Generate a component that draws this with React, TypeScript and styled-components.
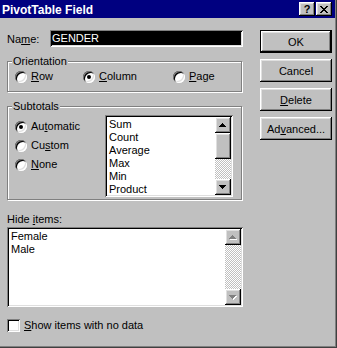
import React from 'react';
import styled, { createGlobalStyle } from 'styled-components';

const GlobalStyle = createGlobalStyle`
  html, body {
    margin: 0;
    padding: 0;
    background: #c0c0c0;
  }
  body {
    font-family: 'Liberation Sans', Arial, sans-serif;
    font-size: 11px;
    color: #000;
  }
`;

const raised = `
  box-shadow: inset -1px -1px #000, inset 1px 1px #fff, inset -2px -2px #808080, inset 2px 2px #dfdfdf;
`;

const sunken = `
  box-shadow: inset 1px 1px #808080, inset -1px -1px #fff, inset 2px 2px #000, inset -2px -2px #dfdfdf;
`;

const Window = styled.div`
  width: 337px;
  height: 348px;
  box-sizing: border-box;
  padding: 0 2px 2px 0;
  background: #c0c0c0;
  box-shadow: inset -1px -1px #404040, inset -2px -2px #808080;
  display: flex;
  flex-direction: column;
`;

const TitleBar = styled.div`
  height: 18px;
  flex-shrink: 0;
  background: #000080;
  color: #fff;
  display: flex;
  align-items: center;
  padding: 0 3px 0 2px;
  font-size: 12px;
  font-weight: bold;
`;

const TitleText = styled.span`
  flex: 1;
  line-height: 18px;
  padding-top: 1px;
`;

const CaptionButtons = styled.div`
  display: flex;
  gap: 1px;
`;

const CaptionButton = styled.div`
  width: 16px;
  height: 14px;
  background: #c0c0c0;
  ${raised}
  display: flex;
  align-items: center;
  justify-content: center;
  color: #000;
  font-size: 11px;
  font-weight: bold;
  line-height: 14px;
`;

const Body = styled.div`
  display: flex;
  padding-left: 7px;
  flex: 1;
`;

const LeftColumn = styled.div`
  width: 236px;
  display: flex;
  flex-direction: column;
`;

const RightColumn = styled.div`
  width: 72px;
  margin-left: 17px;
  padding-top: 12px;
  display: flex;
  flex-direction: column;
  gap: 6px;
`;

const Key = styled.span`
  text-decoration: underline;
  text-underline-offset: 1px;
`;

const NameRow = styled.div`
  display: flex;
  align-items: center;
  margin-top: 12px;
  height: 17px;
`;

const NameLabel = styled.label`
  width: 43px;
  padding-top: 1px;
`;

const NameField = styled.div`
  width: 193px;
  height: 17px;
  box-sizing: border-box;
  background: #000;
  color: #fff;
  padding: 0 2px;
  line-height: 17px;
  ${sunken}
`;

const GroupBox = styled.div<{ $top: number; $height: number }>`
  margin-top: ${(p) => p.$top}px;
  height: ${(p) => p.$height}px;
  width: 235px;
  box-sizing: border-box;
  border: 1px solid #808080;
  box-shadow: inset 1px 1px #fff, 1px 1px #fff;
`;

const Legend = styled.span`
  display: block;
  width: fit-content;
  margin: -7px 0 -6px 4px;
  padding: 0 1px;
  background: #c0c0c0;
  line-height: 13px;
  position: relative;
`;

const OrientationRow = styled.div`
  display: grid;
  grid-template-columns: 68px 90px 1fr;
  padding: 8px 0 0 7px;
`;

const SubtotalsRow = styled.div`
  display: flex;
  align-items: flex-start;
  padding: 8px 8px 0 7px;
`;

const RadioColumn = styled.div`
  margin-top: 5px;
  display: flex;
  flex-direction: column;
  gap: 6px;
`;

const RadioItem = styled.div`
  display: flex;
  align-items: center;
  height: 13px;
  gap: 4px;
  line-height: 13px;
  white-space: nowrap;
`;

const RadioCircle = styled.span<{ $checked?: boolean }>`
  width: 12px;
  height: 12px;
  border-radius: 50%;
  background: #fff;
  ${sunken}
  display: flex;
  align-items: center;
  justify-content: center;
  flex-shrink: 0;

  &::after {
    content: '';
    width: 4px;
    height: 4px;
    border-radius: 50%;
    background: ${(p) => (p.$checked ? '#000' : 'transparent')};
  }
`;

const ListBox = styled.div<{ $width: number; $height: number; $top?: number }>`
  width: ${(p) => p.$width}px;
  height: ${(p) => p.$height}px;
  margin-top: ${(p) => p.$top ?? 0}px;
  margin-left: auto;
  box-sizing: border-box;
  padding: 2px;
  background: #fff;
  ${sunken}
  display: flex;
  overflow: hidden;
  flex-shrink: 0;
`;

const ListItems = styled.div`
  flex: 1;
  padding: 1px 0 0 2px;
  overflow: hidden;
`;

const ListItem = styled.div`
  height: 13px;
  line-height: 13px;
  white-space: nowrap;
`;

const ScrollBar = styled.div`
  width: 16px;
  display: flex;
  flex-direction: column;
  flex-shrink: 0;
`;

const ScrollButton = styled.div`
  width: 16px;
  height: 16px;
  flex-shrink: 0;
  background: #c0c0c0;
  ${raised}
  display: flex;
  align-items: center;
  justify-content: center;
`;

const Thumb = styled.div<{ $size: number }>`
  height: ${(p) => p.$size}px;
  flex-shrink: 0;
  background: #c0c0c0;
  ${raised}
`;

const Track = styled.div`
  flex: 1;
  background: repeating-conic-gradient(#c0c0c0 0% 25%, #fff 0% 50%) 0 0 / 2px 2px;
`;

const FieldLabel = styled.div`
  margin-top: 13px;
  line-height: 13px;
`;

const CheckRow = styled.div`
  display: flex;
  align-items: center;
  gap: 4px;
  margin-top: 12px;
  height: 13px;
  line-height: 13px;
`;

const CheckBox = styled.span`
  width: 13px;
  height: 13px;
  background: #fff;
  ${sunken}
`;

const PushButton = styled.button<{ $default?: boolean }>`
  width: 72px;
  height: 23px;
  box-sizing: border-box;
  padding: 0;
  margin: 0;
  background: #c0c0c0;
  border: ${(p) => (p.$default ? '1px solid #000' : 'none')};
  ${raised}
  font-family: 'Liberation Sans', Arial, sans-serif;
  font-size: 11px;
  color: #000;
  outline: none;
`;

const Arrow = ({ down, disabled }: { down?: boolean; disabled?: boolean }) => {
  const d = down
    ? 'M0 0h7v1H0z M1 1h5v1H1z M2 2h3v1H2z M3 3h1v1H3z'
    : 'M3 0h1v1H3z M2 1h3v1H2z M1 2h5v1H1z M0 3h7v1H0z';
  return (
    <svg width="8" height="5" viewBox="0 0 8 5" shapeRendering="crispEdges" style={{ marginTop: down ? 1 : 0 }}>
      {disabled && <path d={d} fill="#fff" transform="translate(1 1)" />}
      <path d={d} fill={disabled ? '#808080' : '#000'} />
    </svg>
  );
};

const CloseGlyph = () => (
  <svg width="8" height="7" viewBox="0 0 8 7" shapeRendering="crispEdges">
    <path
      fill="#000"
      d="M0 0h2v1H0z M6 0h2v1H6z M1 1h2v1H1z M5 1h2v1H5z M2 2h4v1H2z M3 3h2v1H3z M2 4h4v1H2z M1 5h2v1H1z M5 5h2v1H5z M0 6h2v1H0z M6 6h2v1H6z"
    />
  </svg>
);

const subtotalItems = ['Sum', 'Count', 'Average', 'Max', 'Min', 'Product'];
const hiddenItems = ['Female', 'Male'];

const App: React.FC = () => {
  return (
    <>
      <GlobalStyle />
      <Window>
        <TitleBar>
          <TitleText>PivotTable Field</TitleText>
          <CaptionButtons>
            <CaptionButton>?</CaptionButton>
            <CaptionButton>
              <CloseGlyph />
            </CaptionButton>
          </CaptionButtons>
        </TitleBar>

        <Body>
          <LeftColumn>
            <NameRow>
              <NameLabel>
                Na<Key>m</Key>e:
              </NameLabel>
              <NameField>GENDER</NameField>
            </NameRow>

            <GroupBox $top={14} $height={31}>
              <Legend>Orientation</Legend>
              <OrientationRow>
                <RadioItem>
                  <RadioCircle />
                  <span>
                    <Key>R</Key>ow
                  </span>
                </RadioItem>
                <RadioItem>
                  <RadioCircle $checked />
                  <span>
                    <Key>C</Key>olumn
                  </span>
                </RadioItem>
                <RadioItem>
                  <RadioCircle />
                  <span>
                    <Key>P</Key>age
                  </span>
                </RadioItem>
              </OrientationRow>
            </GroupBox>

            <GroupBox $top={14} $height={94}>
              <Legend>Subtotals</Legend>
              <SubtotalsRow>
                <RadioColumn>
                  <RadioItem>
                    <RadioCircle $checked />
                    <span>
                      Au<Key>t</Key>omatic
                    </span>
                  </RadioItem>
                  <RadioItem>
                    <RadioCircle />
                    <span>
                      Cu<Key>s</Key>tom
                    </span>
                  </RadioItem>
                  <RadioItem>
                    <RadioCircle />
                    <span>
                      <Key>N</Key>one
                    </span>
                  </RadioItem>
                </RadioColumn>
                <ListBox $width={128} $height={82}>
                  <ListItems>
                    {subtotalItems.map((item) => (
                      <ListItem key={item}>{item}</ListItem>
                    ))}
                  </ListItems>
                  <ScrollBar>
                    <ScrollButton>
                      <Arrow />
                    </ScrollButton>
                    <Thumb $size={26} />
                    <Track />
                    <ScrollButton>
                      <Arrow down />
                    </ScrollButton>
                  </ScrollBar>
                </ListBox>
              </SubtotalsRow>
            </GroupBox>

            <FieldLabel>
              Hide <Key>i</Key>tems:
            </FieldLabel>
            <ListBox $width={236} $height={80} $top={1}>
              <ListItems>
                {hiddenItems.map((item) => (
                  <ListItem key={item}>{item}</ListItem>
                ))}
              </ListItems>
              <ScrollBar>
                <ScrollButton>
                  <Arrow disabled />
                </ScrollButton>
                <Track />
                <ScrollButton>
                  <Arrow down disabled />
                </ScrollButton>
              </ScrollBar>
            </ListBox>

            <CheckRow>
              <CheckBox />
              <span>
                <Key>S</Key>how items with no data
              </span>
            </CheckRow>
          </LeftColumn>

          <RightColumn>
            <PushButton $default>OK</PushButton>
            <PushButton>Cancel</PushButton>
            <PushButton>
              <Key>D</Key>elete
            </PushButton>
            <PushButton>
              Ad<Key>v</Key>anced...
            </PushButton>
          </RightColumn>
        </Body>
      </Window>
    </>
  );
};

export default App;
